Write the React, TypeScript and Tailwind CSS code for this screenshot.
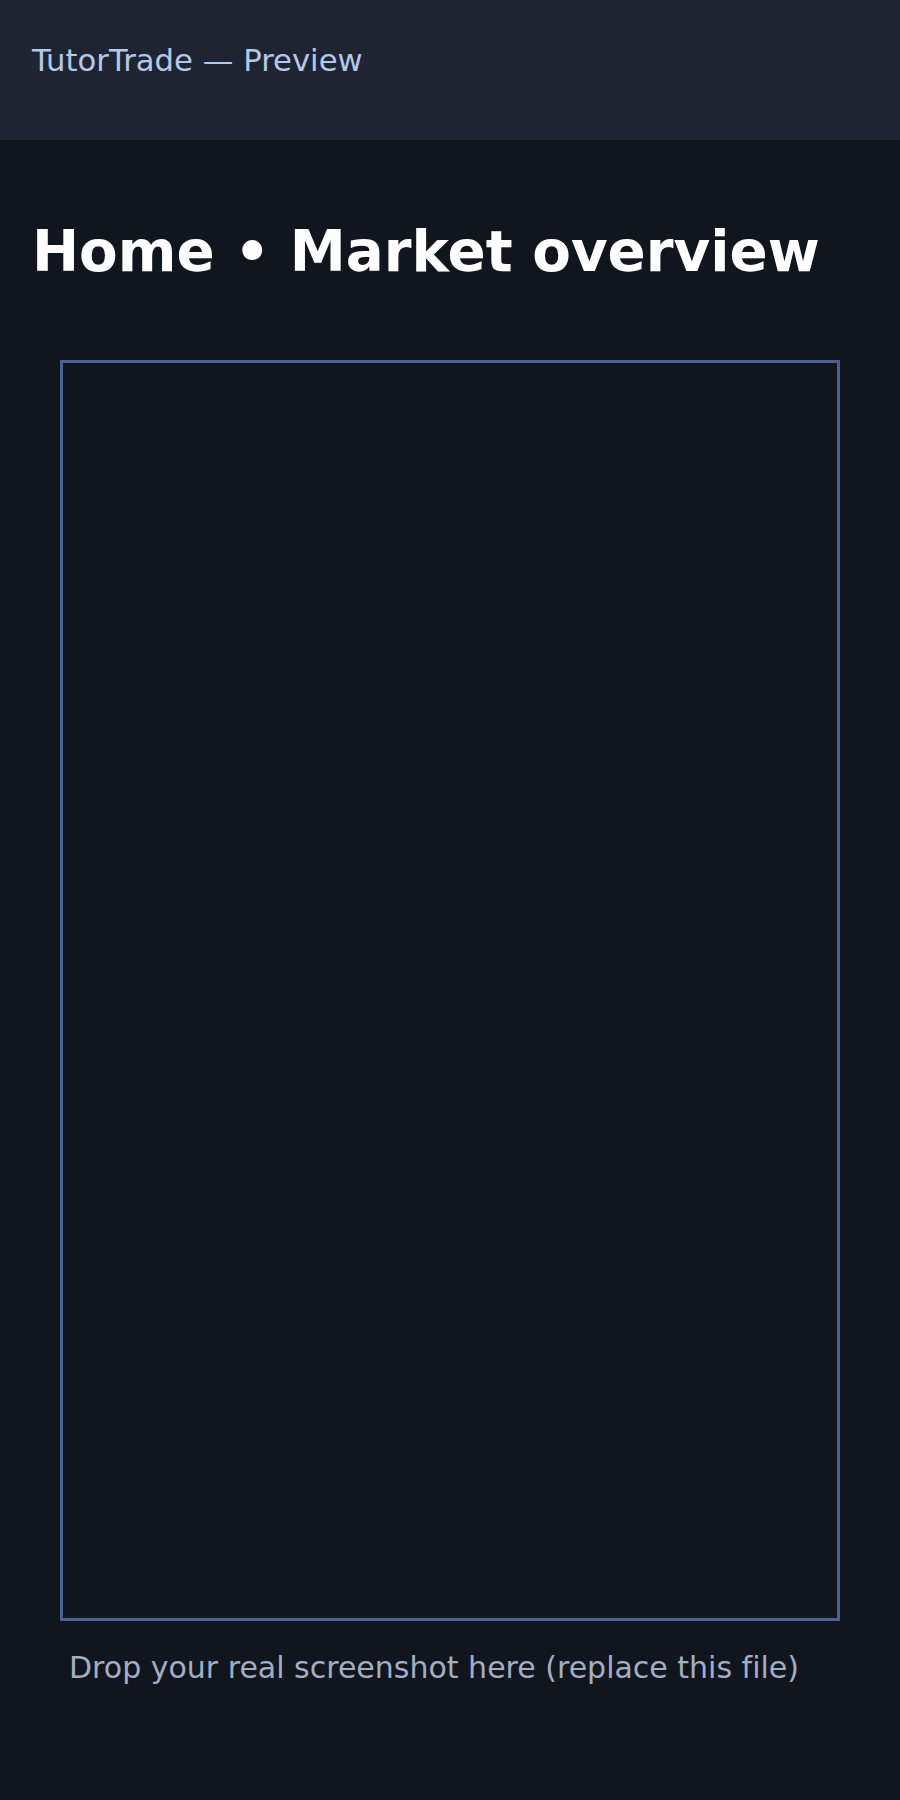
import React from 'react';

const App: React.FC = () => {
  return (
    <div className="min-h-screen w-full bg-[#11151d] font-['DejaVu_Sans',sans-serif] [font-variant-ligatures:none]">
      {/* Top bar */}
      <header className="h-[140px] bg-[#1f2433] px-8 pt-[43px]">
        <span className="text-[30.7px] leading-[36px] text-[#b4c8ea]">TutorTrade — Preview</span>
      </header>

      <main className="px-8">
        <h1 className="mt-[79px] text-[56.3px] leading-[65px] font-bold text-white">Home • Market overview</h1>

        {/* Screenshot placeholder */}
        <div className="mx-[28px] mt-[76px] h-[1261px] border-[3px] border-[#4a6096]" />

        <p className="mt-[29px] ml-[37px] text-[30px] leading-[35px] text-[#a3adc4]">
          Drop your real screenshot here (replace this file)
        </p>
      </main>
    </div>
  );
};

export default App;
